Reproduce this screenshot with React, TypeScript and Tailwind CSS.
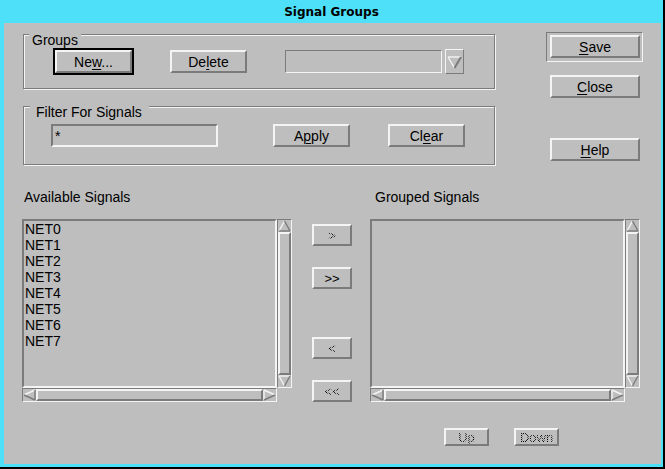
import React from "react";

const sans = "font-['Liberation_Sans',Arial,sans-serif]";

// 2px raised / sunken Motif style bevels
const raised =
  "border-2 border-t-[#f4f4f4] border-l-[#f4f4f4] border-b-[#7b7b7b] border-r-[#7b7b7b]";
const sunken =
  "border-2 border-t-[#7b7b7b] border-l-[#7b7b7b] border-b-[#f4f4f4] border-r-[#f4f4f4]";
const sunken1 =
  "border border-t-[#7b7b7b] border-l-[#7b7b7b] border-b-[#f4f4f4] border-r-[#f4f4f4]";
const raised1 =
  "border border-t-[#f4f4f4] border-l-[#f4f4f4] border-b-[#7b7b7b] border-r-[#7b7b7b]";
const stipple =
  "bg-[repeating-conic-gradient(#000_0_25%,transparent_0_50%)] bg-[length:2px_2px] bg-clip-text text-transparent";

function U({ c }: { c: string }) {
  return <span className="underline decoration-1 underline-offset-[2px]">{c}</span>;
}

interface BtnProps {
  children: React.ReactNode;
  size?: string;
  disabled?: boolean;
  textSize?: string;
}

function Btn({ children, size = "w-[77px] h-[23px]", disabled = false, textSize = "text-[14px]" }: BtnProps) {
  return (
    <div className={`${size} ${raised} bg-[#bebebe] flex items-center justify-center shrink-0`}>
      <span className={`${textSize} leading-none ${disabled ? stipple : "text-black"}`}>{children}</span>
    </div>
  );
}

function Frame({ label, labelClass, height, children }: { label: string; labelClass: string; height: string; children: React.ReactNode }) {
  return (
    <div
      className={`relative w-[472px] ${height} border border-[#7b7b7b] shadow-[inset_1px_1px_0_#f4f4f4,1px_1px_0_#f4f4f4] flex items-center`}
    >
      <span className={`absolute top-[-3px] bg-[#bebebe] text-[14px] leading-4 ${labelClass}`}>{label}</span>
      {children}
    </div>
  );
}

function ArrowUp() {
  return (
    <svg width="13" height="12" viewBox="0 0 13 12" className="block shrink-0">
      <line x1="1" y1="11" x2="6.5" y2="1" stroke="#f4f4f4" strokeWidth="1.4" />
      <line x1="6.5" y1="1" x2="12" y2="11" stroke="#7b7b7b" strokeWidth="1.4" />
      <line x1="1" y1="11" x2="12" y2="11" stroke="#7b7b7b" strokeWidth="1.4" />
    </svg>
  );
}

function ArrowDown() {
  return (
    <svg width="13" height="12" viewBox="0 0 13 12" className="block shrink-0">
      <line x1="1" y1="1" x2="12" y2="1" stroke="#f4f4f4" strokeWidth="1.4" />
      <line x1="1" y1="1" x2="6.5" y2="11" stroke="#f4f4f4" strokeWidth="1.4" />
      <line x1="12" y1="1" x2="6.5" y2="11" stroke="#7b7b7b" strokeWidth="1.4" />
    </svg>
  );
}

function ArrowLeft() {
  return (
    <svg width="13" height="12" viewBox="0 0 13 12" className="block shrink-0">
      <line x1="1" y1="6" x2="12" y2="1" stroke="#f4f4f4" strokeWidth="1.4" />
      <line x1="1" y1="6" x2="12" y2="11" stroke="#7b7b7b" strokeWidth="1.4" />
      <line x1="12" y1="1" x2="12" y2="11" stroke="#7b7b7b" strokeWidth="1.4" />
    </svg>
  );
}

function ArrowRight() {
  return (
    <svg width="13" height="12" viewBox="0 0 13 12" className="block shrink-0">
      <line x1="1" y1="1" x2="1" y2="11" stroke="#f4f4f4" strokeWidth="1.4" />
      <line x1="1" y1="1" x2="12" y2="6" stroke="#f4f4f4" strokeWidth="1.4" />
      <line x1="1" y1="11" x2="12" y2="6" stroke="#7b7b7b" strokeWidth="1.4" />
    </svg>
  );
}

function VScroll() {
  return (
    <div className={`${sunken1} flex flex-col`}>
      <ArrowUp />
      <div className={`flex-1 ${raised}`} />
      <ArrowDown />
    </div>
  );
}

function HScroll() {
  return (
    <div className={`${sunken1} flex`}>
      <ArrowLeft />
      <div className={`flex-1 ${raised}`} />
      <ArrowRight />
    </div>
  );
}

function ListBox({ items }: { items: string[] }) {
  return (
    <div className="grid grid-cols-[255px_15px] grid-rows-[169px_14px] w-[270px] shrink-0">
      <div className={`${sunken} pl-px overflow-hidden text-[14px] leading-4`}>
        {items.map((item) => (
          <div key={item}>{item}</div>
        ))}
      </div>
      <VScroll />
      <HScroll />
      <div />
    </div>
  );
}

const signals = ["NET0", "NET1", "NET2", "NET3", "NET4", "NET5", "NET6", "NET7"];

export default function App() {
  return (
    <div className={`w-[665px] h-[469px] bg-black ${sans} text-black select-none`}>
      <div className="w-[663px] h-[467px] bg-[#4ee0f9] flex flex-col pl-[4px] pr-[2px] pb-[3px]">
        {/* title bar */}
        <div className="h-[23px] flex items-center justify-center pr-[2px]">
          <span className="font-['DejaVu_Sans',sans-serif] font-bold text-[12px] leading-none">Signal Groups</span>
        </div>

        {/* dialog body */}
        <div className="flex-1 bg-[#bebebe] flex flex-col">
          <div className="flex">
            <div className="ml-[19px] mt-[11px] flex flex-col gap-[17px]">
              <Frame label="Groups" labelClass="left-[5px] px-[3px]" height="h-[55px]">
                <div className="ml-[29px] border-2 border-black shrink-0">
                  <Btn>
                    Ne<U c="w" />...
                  </Btn>
                </div>
                <div className="ml-[36px]">
                  <Btn>
                    De<U c="l" />ete
                  </Btn>
                </div>
                <div className={`ml-[38px] w-[157px] h-[23px] ${sunken1}`} />
                <div className={`ml-[3px] w-[19px] h-[25px] ${raised1} flex items-center justify-center`}>
                  <svg width="15" height="14" viewBox="0 0 15 14" className="block">
                    <line x1="1" y1="2" x2="14" y2="2" stroke="#f4f4f4" strokeWidth="1.4" />
                    <line x1="1" y1="2" x2="7.5" y2="13" stroke="#f4f4f4" strokeWidth="1.4" />
                    <line x1="14" y1="2" x2="7.5" y2="13" stroke="#7b7b7b" strokeWidth="2" />
                  </svg>
                </div>
              </Frame>

              <Frame label="Filter For Signals" labelClass="left-[6px] pl-[6px] pr-[7px]" height="h-[59px]">
                <div className={`ml-[27px] w-[167px] h-[23px] ${sunken} bg-[#bebebe] text-[14px] leading-4 pl-[2px] pt-[2px]`}>
                  *
                </div>
                <div className="ml-[55px]">
                  <Btn>
                    A<U c="p" />ply
                  </Btn>
                </div>
                <div className="ml-[38px]">
                  <Btn>
                    Cl<U c="e" />ar
                  </Btn>
                </div>
              </Frame>
            </div>

            <div className="ml-[51px] mt-[9px] flex flex-col">
              <div className={`w-[97px] h-[30px] ${sunken1} pl-[3px] pt-[2px]`}>
                <Btn size="w-[90px] h-[23px]">
                  <U c="S" />ave
                </Btn>
              </div>
              <div className="ml-[4px] mt-[13px]">
                <Btn size="w-[90px] h-[23px]">
                  <U c="C" />lose
                </Btn>
              </div>
              <div className="ml-[4px] mt-[40px]">
                <Btn size="w-[90px] h-[23px]">
                  <U c="H" />elp
                </Btn>
              </div>
            </div>
          </div>

          {/* list labels */}
          <div className="mt-[24px] flex text-[14px] leading-4 h-4">
            <span className="ml-[20px] w-[351px]">Available Signals</span>
            <span>Grouped Signals</span>
          </div>

          {/* lists and move buttons */}
          <div className="mt-[14px] flex items-start">
            <div className="ml-[18px]">
              <ListBox items={signals} />
            </div>
            <div className="ml-[20px] mt-[5px] flex flex-col">
              <Btn size="w-[40px] h-[22px]" textSize="text-[13px]" disabled>
                &gt;
              </Btn>
              <div className="mt-[21px]">
                <Btn size="w-[40px] h-[22px]" textSize="text-[13px]">
                  &gt;&gt;
                </Btn>
              </div>
              <div className="mt-[48px]">
                <Btn size="w-[40px] h-[22px]" textSize="text-[13px]" disabled>
                  &lt;
                </Btn>
              </div>
              <div className="mt-[21px]">
                <Btn size="w-[40px] h-[22px]" textSize="text-[13px]" disabled>
                  &lt;&lt;
                </Btn>
              </div>
            </div>
            <div className="ml-[18px]">
              <ListBox items={[]} />
            </div>
          </div>

          {/* order buttons */}
          <div className="mt-[26px] flex">
            <div className="ml-[440px]">
              <Btn size="w-[45px] h-[18px]" textSize="text-[13px]" disabled>
                Up
              </Btn>
            </div>
            <div className="ml-[25px]">
              <Btn size="w-[45px] h-[18px]" textSize="text-[13px]" disabled>
                Down
              </Btn>
            </div>
          </div>
        </div>
      </div>
    </div>
  );
}
